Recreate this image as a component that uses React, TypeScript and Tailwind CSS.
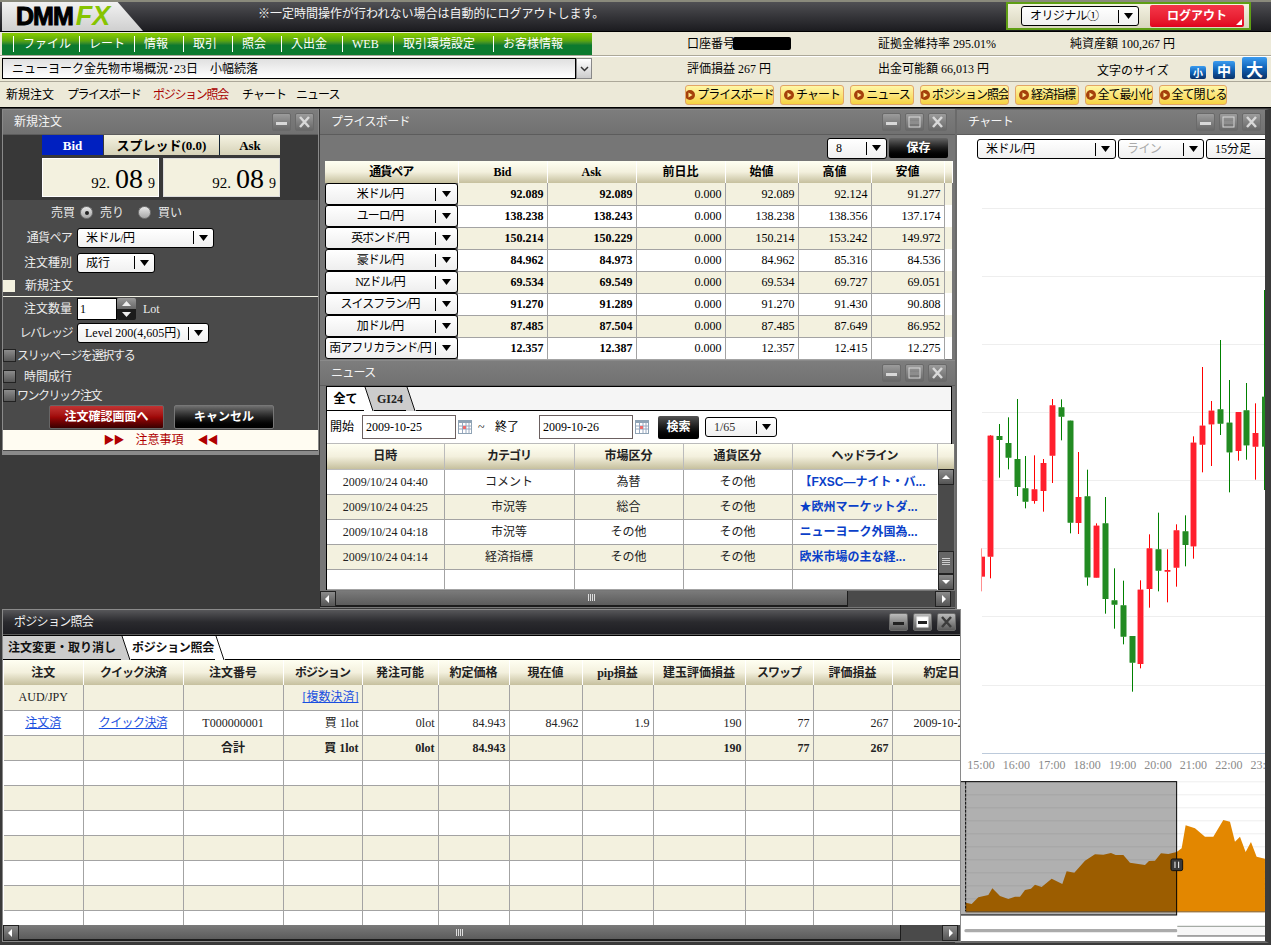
import React from 'react';

const GRID = 'border-[#a3a3a3]';
const HEAD = 'bg-linear-to-b from-[#fffff2] via-[#f3f0dd] to-[#c6c09e]';
const BEIGE = 'bg-[#f3f1df]';

// katakana runs are narrower in the original proportional font
const kana = (s: string) => (/[ァ-ヶー]/.test(s) ? 'tracking-[-1px]' : '');

const board = [
  ['米ドル/円', '92.089', '92.089', '0.000', '92.089', '92.124', '91.277'],
  ['ユーロ/円', '138.238', '138.243', '0.000', '138.238', '138.356', '137.174'],
  ['英ポンド/円', '150.214', '150.229', '0.000', '150.214', '153.242', '149.972'],
  ['豪ドル/円', '84.962', '84.973', '0.000', '84.962', '85.316', '84.536'],
  ['NZドル/円', '69.534', '69.549', '0.000', '69.534', '69.727', '69.051'],
  ['スイスフラン/円', '91.270', '91.289', '0.000', '91.270', '91.430', '90.808'],
  ['加ドル/円', '87.485', '87.504', '0.000', '87.485', '87.649', '86.952'],
  ['南アフリカランド/円', '12.357', '12.387', '0.000', '12.357', '12.415', '12.275'],
];

const news = [
  ['2009/10/24 04:40', 'コメント', '為替', 'その他', '【FXSC―ナイト・バ...'],
  ['2009/10/24 04:25', '市況等', '総合', 'その他', '★欧州マーケットダ...'],
  ['2009/10/24 04:18', '市況等', 'その他', 'その他', 'ニューヨーク外国為...'],
  ['2009/10/24 04:14', '経済指標', 'その他', 'その他', '欧米市場の主な経...'],
  ['', '', '', '', ''],
];

const posHead = ['注文', 'クイック決済', '注文番号', 'ポジション', '発注可能', '約定価格', '現在値', 'pip損益', '建玉評価損益', 'スワップ', '評価損益', '約定日時'];

// [x, wickTop, wickBottom, bodyTop, bodyBottom, isRed], measured in 3x crop pixels
const candles: [number, number, number, number, number, boolean][] = [
  [106, 135, 565, 137, 500, true], [133, 102, 263, 138, 150, false], [160, 82, 238, 159, 203, false],
  [187, 27, 318, 207, 291, false], [212, 198, 355, 295, 335, false], [239, 196, 341, 298, 333, true],
  [265, 207, 365, 219, 303, true], [292, 27, 279, 46, 197, true], [319, 28, 151, 52, 80, false],
  [345, 92, 430, 92, 398, false], [371, 186, 432, 321, 399, true], [398, 239, 587, 319, 562, false],
  [424, 400, 563, 407, 563, true], [451, 321, 671, 400, 627, false], [478, 535, 716, 631, 644, false],
  [505, 572, 763, 646, 740, false], [532, 738, 905, 738, 818, false], [557, 571, 835, 599, 822, true],
  [583, 433, 653, 475, 597, true], [610, 368, 604, 478, 542, false], [637, 478, 637, 540, 545, true],
  [663, 403, 590, 421, 533, true], [690, 376, 529, 424, 465, false], [716, 139, 506, 158, 469, true],
  [742, -69, 247, 107, 164, true], [769, 33, 228, 62, 103, true], [796, -150, 135, 58, 101, false],
  [823, -30, 307, 98, 187, false], [850, 66, 212, 66, 183, true], [875, -21, 209, 61, 166, false],
  [901, 40, 269, 129, 170, true],
];

const area = '32,634 32,608 50,612 70,592 100,585 112,565 135,588 160,597 180,590 195,590 210,570 228,566 240,554 260,561 290,536 322,552 335,514 358,518 390,482 420,463 445,464 468,459 482,465 505,465 525,488 570,495 582,483 600,482 618,460 640,462 665,456 680,445 692,376 720,385 750,410 775,410 805,360 825,365 840,425 855,410 872,456 888,426 905,470 930,476 930,634';

function Arrow({ className = '' }: { className?: string }) {
  return (
    <svg width="9" height="6" viewBox="0 0 9 6" className={className}>
      <path d="M0 0h9L4.500 6z" fill="currentColor" />
    </svg>
  );
}

function Sel({ label, className = '', dim }: { label: string; className?: string; dim?: boolean }) {
  return (
    <div className={`flex items-center h-[20px] rounded-[3px] border border-black bg-linear-to-b from-white to-[#f0f0f0] text-black ${className}`}>
      <span className={`flex-1 pl-[8px] whitespace-nowrap overflow-hidden ${kana(label) ? 'tracking-[-0.6px]' : ''} ${dim ? 'text-[#aaa]' : ''}`}>{label}</span>
      <span className="h-[13px] border-l border-black" />
      <Arrow className="mx-[5px] shrink-0" />
    </div>
  );
}

function WinBtn({ kind, dark }: { kind: 'min' | 'max' | 'close'; dark?: boolean }) {
  const stroke = dark ? '#f4f4f4' : '#d8d8d8';
  return (
    <div className={`flex items-center justify-center w-[19px] h-[18px] rounded-[2px] border border-[#6a6a6a] bg-linear-to-b ${dark ? 'from-[#bcbcbc] to-[#5a5a5a]' : 'from-[#9c9c9c] to-[#686868]'}`}>
      <svg width="13" height="12" viewBox="0 0 13 12">
        {kind === 'min' && <rect x="1" y="6" width="11" height="3" fill={dark ? '#222' : stroke} />}
        {kind === 'max' && (
          <>
            <rect x="1" y="1" width="11" height="10" fill={dark ? '#fff' : 'none'} stroke={stroke} />
            <rect x="2" y="5" width="9" height="3" fill={dark ? '#222' : '#8d8d8d'} />
          </>
        )}
        {kind === 'close' && <path d="M2 1l9 10M11 1L2 11" stroke={dark ? '#3c3c3c' : stroke} strokeWidth="2.500" />}
      </svg>
    </div>
  );
}

function TitleBar({ title, dark, btns, gap = 'gap-[3px]', pr = 'pr-[4px]' }: { title: string; dark?: boolean; btns: ('min' | 'max' | 'close')[]; gap?: string; pr?: string }) {
  return (
    <div className={`flex items-center h-[25px] pl-[11px] text-[#f4f4f4] border-b border-[#5c5c5c] bg-linear-to-b ${dark ? 'from-[#57575a] via-[#2a2a2e] to-[#1d1d22]' : 'from-[#7d7d7d] to-[#717171]'}`}>
      <span className={`flex-1 ${kana(title) ? 'tracking-[-0.7px]' : ''}`}>{title}</span>
      <div className={`flex items-center ${pr} ${gap}`}>
        {btns.map((b) => (
          <WinBtn key={b} kind={b} dark={dark} />
        ))}
      </div>
    </div>
  );
}

function TabEdge({ from, to }: { from: string; to: string }) {
  return (
    <svg width="10" height="24" viewBox="0 0 10 24" className="shrink-0">
      <rect width="10" height="24" fill={to} />
      <path d="M0 0h1l8 24H0z" fill={from} />
      <path d="M1 0l8 24" stroke="#111" />
    </svg>
  );
}

function ScrollBtn({ dir }: { dir: 'left' | 'right' | 'up' | 'down' }) {
  const d = { left: 'M6 1v8L2 5z', right: 'M4 1v8l4-4z', up: 'M1 7h8L5 3z', down: 'M1 3h8L5 7z' }[dir];
  return (
    <div className="flex items-center justify-center shrink-0 w-[16px] h-[16px] border border-[#222] bg-linear-to-b from-[#8c8c8c] to-[#555]">
      <svg width="10" height="10" viewBox="0 0 10 10">
        <path d={d} fill="#fff" />
      </svg>
    </div>
  );
}

function HScroll({ thumb, track }: { thumb: string; track: string }) {
  return (
    <div className="flex items-center h-[16px] bg-[#4a4a4a]">
      <ScrollBtn dir="left" />
      <div className={`flex items-center justify-center h-[16px] border-b-2 border-r border-[#1c1c1c] bg-linear-to-b from-[#7a7a7a] to-[#5c5c5c] ${thumb}`}>
        <div className="w-[8px] h-[7px] bg-[repeating-linear-gradient(90deg,#ddd_0,#ddd_1px,transparent_1px,transparent_2px)]" />
      </div>
      <div className={`h-[16px] ${track}`} />
      <ScrollBtn dir="right" />
    </div>
  );
}

function YellowBtn({ label, className }: { label: string; className: string }) {
  return (
    <div className={`flex items-center justify-center gap-[2px] h-[20px] rounded-[3px] border border-[#e3a566] bg-linear-to-b from-[#fff7a6] to-[#f6d23e] text-black whitespace-nowrap overflow-hidden tracking-[-1px] ${className}`}>
      <svg width="10" height="10" viewBox="0 0 10 10" className="shrink-0">
        <circle cx="5" cy="5" r="5" fill="#a5400c" />
        <path d="M3.500 2.500v5L7.500 5z" fill="#ffe98a" />
      </svg>
      <span>{label}</span>
    </div>
  );
}

function SizeBtn({ label, className }: { label: string; className: string }) {
  return (
    <div className={`flex items-center justify-center rounded-[2px] bg-linear-to-b from-[#3b9cf0] via-[#0f63b8] to-[#0a3168] font-bold text-white font-['Noto_Sans_CJK_JP',sans-serif] ${className}`}>
      {label}
    </div>
  );
}

function Price() {
  return (
    <div className="flex items-baseline justify-end w-full pr-[3px] text-black">
      <span className="text-[15px]">92.</span>
      <span className="text-[28px] leading-[34px] mx-[5px]">08</span>
      <span className="text-[14px]">9</span>
    </div>
  );
}

function Radio({ on }: { on?: boolean }) {
  return (
    <div className="flex items-center justify-center w-[13px] h-[13px] rounded-full border border-[#777] bg-linear-to-b from-[#e8e8e8] to-[#a8a8a8]">
      {on && <div className="w-[4px] h-[4px] rounded-full bg-[#222]" />}
    </div>
  );
}

function Check() {
  return <div className="w-[13px] h-[13px] shrink-0 border border-[#222] bg-linear-to-b from-[#8c8c8c] to-[#585858]" />;
}

function Calendar() {
  return (
    <svg width="14" height="14" viewBox="0 0 14 14" className="shrink-0">
      <rect width="14" height="14" fill="#8fa3b5" />
      <rect x="1" y="3" width="12" height="10" fill="#fff" />
      <path d="M4.500 3v10M8 3v10M11 3v10M1 6h12M1 9h12" stroke="#98a8c0" />
      <rect x="5" y="6" width="3" height="3" fill="#ef6a6a" />
    </svg>
  );
}

function FormLabel({ children, tight }: { children: React.ReactNode; tight?: string }) {
  return <span className={`w-[69px] text-right whitespace-nowrap mr-[5px] ${tight ?? ''}`}>{children}</span>;
}

function OrderWindow() {
  return (
    <div className="absolute left-[2px] top-[109px] w-[317px] h-[346px] border border-[#8a8a8a] border-b-4 bg-[#4a4a4a]">
      <TitleBar title="新規注文" btns={['min', 'close']} gap="gap-[4px]" />
      <div className="h-[65px] pl-[39px] bg-[#383838]">
        <div className="flex w-[238px] h-[20px] font-bold text-[13px] text-black">
          <div className="flex items-center justify-center w-[61px] bg-[#0020c0] text-white">Bid</div>
          <div className="flex items-center justify-center w-[115px] ml-[1px] bg-linear-to-b from-[#f5f3e2] to-[#d6d2b8]">スプレッド(0.0)</div>
          <div className="flex items-center justify-center flex-1 border-l border-[#123] bg-linear-to-b from-[#f5f3e2] to-[#d6d2b8]">Ask</div>
        </div>
        <div className="flex gap-[4px] mt-[3px] h-[39px]">
          <div className="flex items-end w-[117px] bg-[#f3f1df] border border-white"><Price /></div>
          <div className="flex items-end w-[117px] bg-[#f3f1df] border border-[#ddd]"><Price /></div>
        </div>
      </div>
      <div className="flex flex-col text-[#ececec]">
        <div className="flex items-center h-[25px] pl-[48px]">
          <span className="mr-[5px]">売買</span>
          <Radio on />
          <span className="ml-[7px]">売り</span>
          <span className="ml-[14px]"><Radio /></span>
          <span className="ml-[7px]">買い</span>
        </div>
        <div className="flex items-center h-[25px]">
          <FormLabel tight="tracking-[-0.7px]">通貨ペア</FormLabel>
          <Sel label="米ドル/円" className="w-[137px]" />
        </div>
        <div className="flex items-center h-[25px]">
          <FormLabel>注文種別</FormLabel>
          <Sel label="成行" className="w-[78px]" />
        </div>
        <div className="flex items-center h-[22px] border-b border-[#f5f5e8]">
          <div className="w-[12px] h-[12px] bg-[#f3f1df] mr-[10px]" />
          <span>新規注文</span>
        </div>
        <div className="flex items-center h-[23px]">
          <FormLabel>注文数量</FormLabel>
          <div className="w-[40px] h-[22px] pl-[2px] bg-white border border-black text-black leading-[20px]">1</div>
          <div className="flex flex-col w-[19px] h-[22px] rounded-[2px] overflow-hidden">
            <div className="flex items-center justify-center h-[11px] bg-linear-to-b from-[#999] to-[#666]">
              <svg width="9" height="5" viewBox="0 0 9 5"><path d="M0 5h9L4.500 0z" fill="#eee" /></svg>
            </div>
            <div className="flex items-center justify-center h-[11px] bg-[#1b1b1b]">
              <svg width="9" height="5" viewBox="0 0 9 5"><path d="M0 0h9L4.500 5z" fill="#eee" /></svg>
            </div>
          </div>
          <span className="ml-[7px]">Lot</span>
        </div>
        <div className="flex items-center h-[26px]">
          <FormLabel tight="tracking-[-1.5px]">レバレッジ</FormLabel>
          <Sel label="Level 200(4,605円)" className="w-[132px] [&>span:first-child]:pl-[7px]" />
        </div>
        <div className="flex items-center h-[19px]"><Check /><span className="ml-[1px] tracking-[-1.3px]">スリッページを選択する</span></div>
        <div className="flex items-center h-[23px]"><Check /><span className="ml-[8px]">時間成行</span></div>
        <div className="flex items-center h-[15px]"><Check /><span className="ml-[1px] tracking-[-1.5px]">ワンクリック注文</span></div>
        <div className="flex h-[27px] pt-[2px] pl-[46px] gap-[10px] font-bold text-white">
          <div className="flex items-center justify-center w-[115px] h-[24px] rounded-[2px] border border-[#666] bg-linear-to-b from-[#c23333] via-[#a00808] to-[#3a0000]">注文確認画面へ</div>
          <div className="flex items-center justify-center w-[100px] h-[24px] rounded-[2px] border border-[#777] bg-linear-to-b from-[#707070] via-[#222] to-[#000]">キャンセル</div>
        </div>
        <div className="flex items-center justify-center h-[20px] bg-[#fffcf2] text-[#b00000]">
          <span className="text-[11px] tracking-[-1px] mr-[12px]">▶▶</span>
          <span>注意事項</span>
          <span className="text-[11px] tracking-[-1px] ml-[14px]">◀◀</span>
        </div>
      </div>
    </div>
  );
}

function BoardWindow() {
  return (
    <div className="absolute left-[320px] top-[109px] w-[635px] h-[251px] border-t border-[#8a8a8a] bg-[#767676]">
      <TitleBar title="プライスボード" btns={['min', 'max', 'close']} gap="gap-[4px]" pr="pr-[8px]" />
      <div className="flex justify-end items-center h-[26px] pr-[7px] gap-[2px]">
        <Sel label="8" className="w-[60px] h-[21px]" />
        <div className="flex items-center justify-center w-[59px] h-[20px] rounded-[2px] bg-linear-to-b from-[#666] via-[#1c1c1c] to-black text-white font-bold">保存</div>
      </div>
      <table className="ml-[5px] w-[627px] table-fixed border-collapse">
        <colgroup>
          <col className="w-[133px]" />
          <col className="w-[89px]" />
          <col className="w-[89px]" />
          <col className="w-[89px]" />
          <col className="w-[73px]" />
          <col className="w-[73px]" />
          <col className="w-[73px]" />
          <col className="w-[8px]" />
        </colgroup>
        <thead>
          <tr className={`h-[22px] ${HEAD} font-bold`}>
            {['通貨ペア', 'Bid', 'Ask', '前日比', '始値', '高値', '安値', ''].map((h, i) => (
              <th key={i} className={`p-0 border-r border-white ${kana(h)}`}>{h}</th>
            ))}
          </tr>
        </thead>
        <tbody>
          {board.map((r, i) => (
            <tr key={r[0]} className={`h-[22px] ${i % 2 === 0 ? BEIGE : 'bg-white'}`}>
              <td className="p-0 bg-[#767676]">
                <div className="flex items-center h-[22px] rounded-[3px] border border-black bg-linear-to-b from-white to-[#eee]">
                  <span className="flex-1 text-center whitespace-nowrap overflow-hidden tracking-[-1px]">{r[0]}</span>
                  <span className="h-[13px] border-l border-black ml-[1px]" />
                  <Arrow className="mx-[6px] shrink-0" />
                </div>
              </td>
              {r.slice(1).map((c, j) => (
                <td key={j} className={`p-0 pr-[3px] text-right border-r border-b ${GRID} ${j < 2 ? 'font-bold' : ''}`}>{c}</td>
              ))}
              <td className="p-0" />
            </tr>
          ))}
        </tbody>
      </table>
    </div>
  );
}

function NewsWindow() {
  const cols = ['w-[117px]', 'w-[130px]', 'w-[109px]', 'w-[109px]', 'w-[145px]'];
  return (
    <div className="absolute left-[320px] top-[360px] w-[635px] h-[248px] border-t border-[#8a8a8a] bg-[#767676]">
      <TitleBar title="ニュース" btns={['min', 'max', 'close']} gap="gap-[4px]" pr="pr-[8px]" />
      <div className="ml-[6px] w-[626px] border-l border-r border-black">
        <div className="flex h-[25px] bg-[#f5f5f5] border-t border-b border-black font-bold">
          <div className="flex items-center justify-center w-[37px] bg-white">全て</div>
          <TabEdge from="#ffffff" to="#cccccc" />
          <div className="flex items-center justify-center w-[32px] bg-[#cccccc] text-[#222]">GI24</div>
          <TabEdge from="#cccccc" to="#f5f5f5" />
        </div>
        <div className="flex items-center h-[33px] bg-white text-black border-b border-[#bbb]">
          <span className="ml-[3px] w-[32px]">開始</span>
          <div className="flex items-center w-[94px] h-[24px] pl-[3px] border border-[#6b6060]">2009-10-25</div>
          <span className="ml-[2px]"><Calendar /></span>
          <span className="ml-[6px] w-[17px]">~</span>
          <span className="w-[44px]">終了</span>
          <div className="flex items-center w-[94px] h-[24px] pl-[3px] border border-[#6b6060]">2009-10-26</div>
          <span className="ml-[2px]"><Calendar /></span>
          <div className="flex items-center justify-center ml-[9px] w-[41px] h-[23px] rounded-[2px] bg-linear-to-b from-[#555] via-[#1a1a1a] to-black text-white font-bold">検索</div>
          <Sel label="1/65" className="ml-[6px] w-[72px] [&>span:first-child]:text-[#333]" />
        </div>
        <div className="flex">
          <table className="w-[610px] table-fixed border-collapse bg-white">
            <colgroup>
              {cols.map((c, i) => (
                <col key={i} className={c} />
              ))}
            </colgroup>
            <thead>
              <tr className={`h-[25px] ${HEAD} font-bold text-[#222]`}>
                {['日時', 'カテゴリ', '市場区分', '通貨区分', 'ヘッドライン'].map((h) => (
                  <th key={h} className={`p-0 border-r border-b border-[#bbb] ${kana(h)}`}>{h}</th>
                ))}
              </tr>
            </thead>
            <tbody>
              {news.map((r, i) => (
                <tr key={i} className={`${i === 4 ? 'h-[20px]' : 'h-[25px]'} ${i % 2 === 1 ? BEIGE : 'bg-white'}`}>
                  {r.map((c, j) =>
                    j === 4 ? (
                      <td key={j} className={`p-0 pl-[7px] whitespace-nowrap overflow-hidden font-bold text-[#0a3fc8] border-b ${GRID} font-['Liberation_Sans','Noto_Sans_CJK_JP',sans-serif]`}>{c}</td>
                    ) : (
                      <td key={j} className={`p-0 text-center text-[#222] border-r border-b ${GRID}`}>{c}</td>
                    )
                  )}
                </tr>
              ))}
            </tbody>
          </table>
          <div className="flex flex-col w-[16px]">
            <div className={`h-[25px] ${HEAD}`} />
            <div className="flex flex-col flex-1 bg-[#4a4a4a]">
              <ScrollBtn dir="up" />
              <div className="flex-1" />
              <div className="flex items-center justify-center h-[23px] border border-[#222] bg-[#666]">
                <div className="w-[8px] h-[8px] bg-[repeating-linear-gradient(180deg,#ccc_0,#ccc_1px,transparent_1px,transparent_2px)]" />
              </div>
              <ScrollBtn dir="down" />
            </div>
          </div>
        </div>
      </div>
      <div className="mt-[1px]">
        <HScroll thumb="w-[512px]" track="w-[87px]" />
      </div>
    </div>
  );
}

function ChartWindow() {
  const x = (z: number) => 955 + z / 3;
  const y = (z: number) => 390 + z / 3;
  return (
    <div className="absolute left-[955px] top-[109px] w-[314px] h-[834px] border-2 border-t border-[#6a6a6a] border-r-4 border-r-[#3c3c3c] bg-white">
      <TitleBar title="チャート" btns={['min', 'max', 'close']} gap="gap-[4px]" />
      <div className="flex items-center h-[28px] pl-[20px] gap-[2px] overflow-hidden">
        <Sel label="米ドル/円" className="w-[139px] shrink-0" />
        <Sel label="ライン" dim className="w-[86px] shrink-0" />
        <Sel label="15分足" className="w-[90px] shrink-0" />
      </div>
      <svg width="308" height="778" viewBox="957 163 308 778" className="block" fontFamily="Liberation Serif, serif">
        {[208, 276, 344, 412, 480, 548, 616, 685].map((g) => (
          <rect key={g} x="982" y={g} width="283" height="1" fill="#eeeeee" />
        ))}
        <rect x="982" y="753" width="283" height="1" fill="#bccadb" />
        <rect x="981" y={y(475)} width="1" height="43" fill="#ff9090" />
        <rect x="982" y={y(500)} width="3" height="20" fill="#ff2030" />
        <rect x="1264" y={y(-300)} width="1" height="200" fill="#008000" />
        <rect x="1262" y={y(20)} width="3" height="50" fill="#228b22" />
        {candles.map(([cx, wt, wb, bt, bb, red]) => (
          <g key={cx}>
            <rect x={Math.floor(x(cx))} y={y(wt)} width="1" height={(wb - wt) / 3} fill={red ? '#ff0000' : '#008000'} />
            <rect x={Math.floor(x(cx)) - 3} y={y(bt)} width="7" height={(bb - bt) / 3} fill={red ? '#ff9aa0' : '#8fc48f'} />
            <rect x={Math.floor(x(cx)) - 2} y={y(bt)} width="5" height={(bb - bt) / 3} fill={red ? '#ff1f2d' : '#228b22'} />
          </g>
        ))}
        {['15:00', '16:00', '17:00', '18:00', '19:00', '20:00', '21:00', '22:00', '23:00'].map((t, i) => (
          <text key={t} x={981 + i * 35.4} y="769" fontSize="12" fill="#8a8a8a" textAnchor="middle">{t}</text>
        ))}
        <g transform="translate(955 700) scale(0.3333)">
          {[244, 283, 322, 361, 400, 439, 478, 517, 556, 595].map((g) => (
            <rect key={g} x="32" y={g} width="898" height="3" fill="#eeeeee" />
          ))}
          <polygon points={area} fill="#e38700" />
          <rect x="32" y="634" width="898" height="3" fill="#7a4800" />
          <rect x="15" y="245" width="650" height="400" fill="#000000" fillOpacity="0.31" stroke="#000" strokeWidth="3" />
          <path d="M32 245V634" stroke="#000" strokeWidth="3" strokeDasharray="9 3" />
          <rect x="648" y="477" width="35" height="35" rx="5" fill="#3a3a3a" stroke="#111" strokeWidth="3" />
          <path d="M660 485v19M671 485v19" stroke="#fff" strokeWidth="3" />
          <rect x="28" y="687" width="640" height="10" rx="5" fill="#ababab" />
          <rect x="667" y="679" width="263" height="30" fill="#f7f7f7" />
          <path d="M667 679h263" stroke="#909890" strokeWidth="3" />
          <path d="M667 708h263" stroke="#555" strokeWidth="3" />
        </g>
      </svg>
    </div>
  );
}

function PositionWindow() {
  const cols = ['w-[79px]', 'w-[100px]', 'w-[100px]', 'w-[79px]', 'w-[76px]', 'w-[71px]', 'w-[73px]', 'w-[71px]', 'w-[92px]', 'w-[68px]', 'w-[79px]', 'w-[110px]'];
  const cell = `p-0 pr-[3px] text-right border-r border-b ${GRID} whitespace-nowrap`;
  const link = 'text-[#1a4fe0] underline';
  const empties = Array.from({ length: 7 }, (_, i) => i);
  return (
    <div className="absolute left-[2px] top-[609px] w-[959px] h-[333px] border border-[#8a8a8a] border-b-[3px] bg-[#4a4a4a]">
      <TitleBar title="ポジション照会" dark btns={['min', 'max', 'close']} gap="gap-[5px]" />
      <div className="flex h-[25px] bg-white border-b border-t border-black font-bold text-[#111]">
        <div className="flex items-center justify-center w-[118px] bg-[#cccccc]">注文変更・取り消し</div>
        <TabEdge from="#cccccc" to="#ffffff" />
        <div className="flex items-center justify-center w-[84px] tracking-[-0.3px]">ポジション照会</div>
        <TabEdge from="#ffffff" to="#ffffff" />
      </div>
      <div className="h-[265px] overflow-hidden bg-white pl-[1px]">
        <table className="w-[998px] table-fixed border-collapse text-[#222]">
          <colgroup>
            {cols.map((c, i) => (
              <col key={i} className={c} />
            ))}
          </colgroup>
          <thead>
            <tr className={`h-[25px] ${HEAD} font-bold`}>
              {posHead.map((h, i) => (
                <th key={h} className={`p-0 border-r border-white whitespace-nowrap ${kana(h)} ${i === 11 ? 'text-left pl-[31px]' : ''}`}>{h}</th>
              ))}
            </tr>
          </thead>
          <tbody>
            <tr className={`h-[25px] ${BEIGE}`}>
              <td className={`${cell} !text-center !pr-0`}>AUD/JPY</td>
              <td className={cell} />
              <td className={cell} />
              <td className={cell}><span className={link}>[複数決済]</span></td>
              {[0, 1, 2, 3, 4, 5, 6, 7].map((k) => (
                <td key={k} className={cell} />
              ))}
            </tr>
            <tr className="h-[25px] bg-white">
              <td className={`${cell} !text-center !pr-0`}><span className={link}>注文済</span></td>
              <td className={`${cell} !text-center !pr-0`}><span className={`${link} tracking-[-0.6px]`}>クイック決済</span></td>
              <td className={`${cell} !text-center !pr-0`}>T000000001</td>
              <td className={cell}>買 1lot</td>
              <td className={cell}>0lot</td>
              <td className={cell}>84.943</td>
              <td className={cell}>84.962</td>
              <td className={cell}>1.9</td>
              <td className={cell}>190</td>
              <td className={cell}>77</td>
              <td className={cell}>267</td>
              <td className={`${cell} !text-left pl-[21px]`}>2009-10-24</td>
            </tr>
            <tr className={`h-[25px] ${BEIGE} font-bold`}>
              <td className={cell} />
              <td className={cell} />
              <td className={`${cell} !text-center !pr-0`}>合計</td>
              <td className={cell}>買 1lot</td>
              <td className={cell}>0lot</td>
              <td className={cell}>84.943</td>
              <td className={cell} />
              <td className={cell} />
              <td className={cell}>190</td>
              <td className={cell}>77</td>
              <td className={cell}>267</td>
              <td className={cell} />
            </tr>
            {empties.map((e) => (
              <tr key={e} className={`h-[25px] ${e % 2 === 1 ? BEIGE : 'bg-white'}`}>
                {cols.map((c, i) => (
                  <td key={i} className={cell} />
                ))}
              </tr>
            ))}
          </tbody>
        </table>
      </div>
      <HScroll thumb="w-[882px]" track="w-[41px]" />
    </div>
  );
}

export default function App() {
  const menu = [
    ['ファイル', 'w-[66px]'], ['レート', 'w-[55px]'], ['情報', 'w-[49px]'], ['取引', 'w-[49px]'], ['照会', 'w-[49px]'],
    ['入出金', 'w-[61px]'], ['WEB', 'w-[51px]'], ['取引環境設定', 'w-[100px]'], ['お客様情報', 'w-[99px]'],
  ];
  const yellow = [
    ['プライスボード', 'w-[89px]'], ['チャート', 'w-[64px]'], ['ニュース', 'w-[64px]'], ['ポジション照会', 'w-[89px]'],
    ['経済指標', 'w-[64px]'], ['全て最小化', 'w-[68px]'], ['全て閉じる', 'w-[68px]'],
  ];
  return (
    <div className="relative w-[1271px] h-[945px] overflow-hidden flex flex-col bg-[#ece9d8] text-[12px] leading-none text-black font-['Liberation_Serif','Noto_Sans_CJK_JP',serif]">
      <div className="flex items-center h-[32px] shrink-0 border-t-2 border-[#8a8a7c] border-b border-b-black bg-linear-to-b from-[#505054] to-[#1c1c20]">
        <div className="flex items-center w-[141px] h-[29px] ml-[2px] pl-[14px] bg-linear-to-b from-[#f2f2f2] to-[#cfcfcf] [clip-path:polygon(0_0,82%_0,100%_100%,0_100%)] font-bold italic text-[25px] font-['Liberation_Sans',sans-serif]">
          <span className="not-italic text-black tracking-[-1px] [-webkit-text-stroke:1px_black]">DMM</span>
          <span className="ml-[3px] text-[#86c400] text-[27px]">FX</span>
        </div>
        <span className="ml-[115px] -mt-[6px] text-[#f4f4f4] whitespace-nowrap">※一定時間操作が行われない場合は自動的にログアウトします。</span>
        <div className="flex items-center gap-[11px] ml-auto mr-[20px] w-[245px] h-[28px] pl-[13px] border-2 border-[#5f9e14] bg-linear-to-b from-[#f4f2e2] to-[#d9d6bf] -mt-[1px]">
          <Sel label="オリジナル①" className="w-[118px]" />
          <div className="flex items-center justify-center relative w-[94px] h-[22px] bg-linear-to-b from-[#f5364a] to-[#e0001e] rounded-[2px] text-white font-bold">
            ログアウト
            <span className="absolute right-[2px] bottom-[2px] w-0 h-0 border-l-[6px] border-l-transparent border-b-[6px] border-b-white" />
          </div>
        </div>
      </div>
      <div className="flex items-center h-[23px] shrink-0">
        <div className="flex items-center ml-[2px] w-[590px] h-[22px] pl-[11px] text-white bg-linear-to-b from-[#84c800] from-[5%] via-[#5aa60c] via-[35%] to-[#0c7a2e] to-[55%]">
          {menu.map(([m, w]) => (
            <div key={m} className={`h-[16px] pl-[9px] border-l border-white leading-[16px] whitespace-nowrap ${w}`}>{m}</div>
          ))}
        </div>
        <span className="ml-[95px] w-[46px] whitespace-nowrap">口座番号</span>
        <span className="w-[58px] h-[13px] rounded-[2px] bg-black" />
        <span className="ml-[87px] w-[192px]">証拠金維持率 295.01%</span>
        <span>純資産額 100,267 円</span>
      </div>
      <div className="flex items-center h-[26px] shrink-0 border-t border-[#aca899] shadow-[inset_0_1px_0_#fff]">
        <div className="flex ml-[2px] w-[590px] h-[21px]">
          <div className="flex-1 flex items-center pl-[9px] border border-black bg-linear-to-b from-[#e0e0e0] to-white">ニューヨーク金先物市場概況･23日　小幅続落</div>
          <div className="flex items-center justify-center w-[16px] border border-[#888] bg-linear-to-b from-white to-[#ccc]">
            <svg width="9" height="6" viewBox="0 0 9 6"><path d="M1 1l3.500 3.500L8 1" fill="none" stroke="#333" strokeWidth="1.500" /></svg>
          </div>
        </div>
        <span className="ml-[95px] w-[191px]">評価損益 267 円</span>
        <span className="w-[219px]">出金可能額 66,013 円</span>
        <span className="w-[93px] mt-[5px]">文字のサイズ</span>
        <div className="flex items-end gap-[7px] h-[22px] -mt-[1px]">
          <SizeBtn label="小" className="w-[16px] h-[13px] text-[10px]" />
          <SizeBtn label="中" className="w-[22px] h-[18px] text-[14px]" />
          <SizeBtn label="大" className="w-[25px] h-[22px] text-[17px]" />
        </div>
      </div>
      <div className="flex items-center h-[27px] shrink-0 border-t border-[#aca899] border-b border-b-black">
        <div className="flex w-[685px] pl-[6px] text-black whitespace-nowrap">
          <span className="w-[61px]">新規注文</span>
          <span className="w-[86px] tracking-[-1.5px]">プライスボード</span>
          <span className="w-[89px] text-[#a80000] tracking-[-1.3px]">ポジション照会</span>
          <span className="w-[54px] tracking-[-1px]">チャート</span>
          <span className="tracking-[-1px]">ニュース</span>
        </div>
        <div className="flex gap-[6px]">
          {yellow.map(([l, w]) => (
            <YellowBtn key={l} label={l} className={w} />
          ))}
        </div>
      </div>
      <div className="flex-1 bg-[#3a3a3a]" />
      <OrderWindow />
      <BoardWindow />
      <NewsWindow />
      <ChartWindow />
      <PositionWindow />
    </div>
  );
}
